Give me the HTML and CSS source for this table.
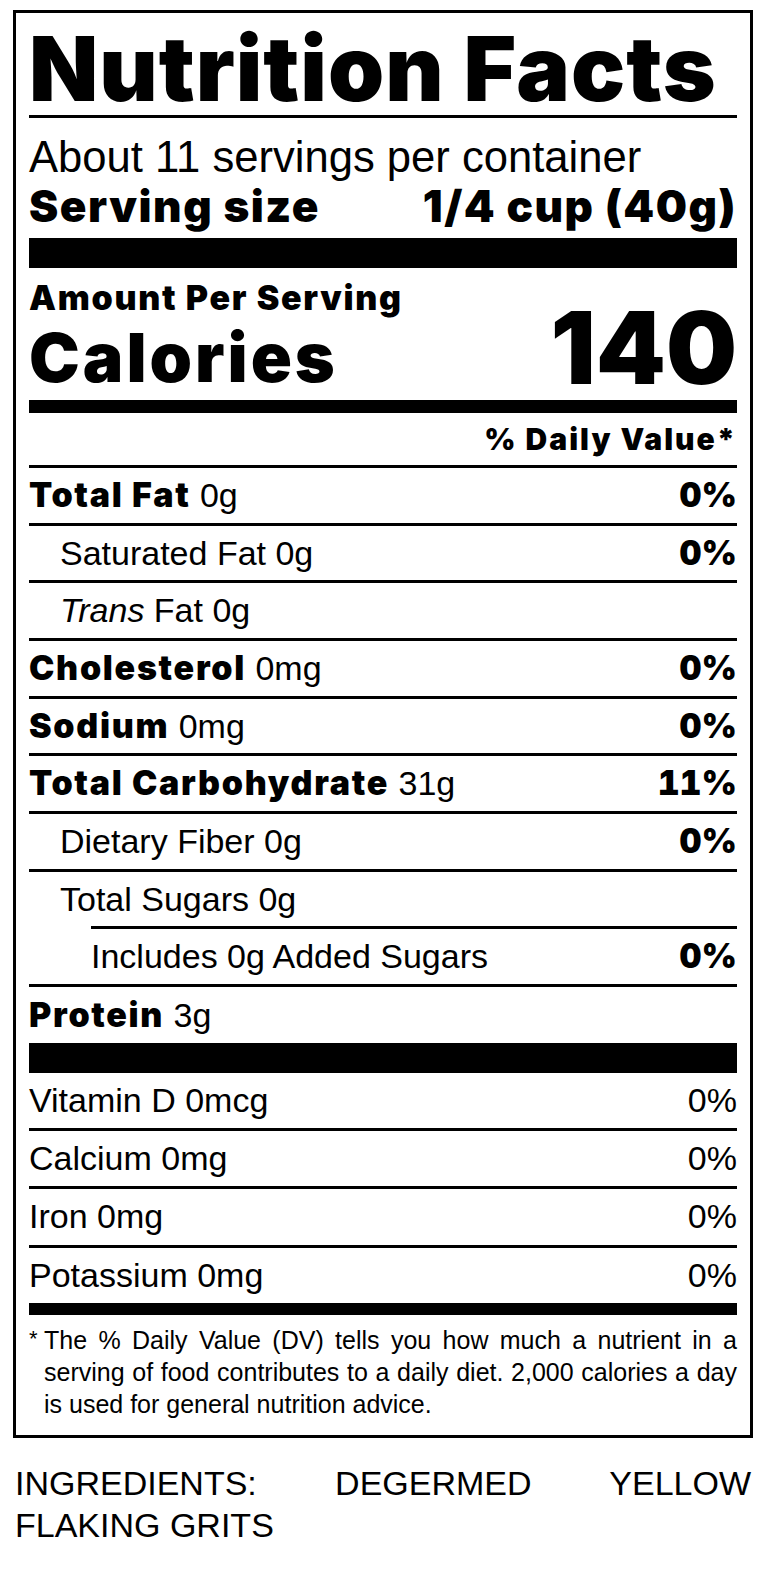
FILE: index.html
```html
<!DOCTYPE html>
<html lang="en">
<head>
<meta charset="utf-8">
<title>Nutrition Facts</title>
<link rel="stylesheet" href="styles.css">
</head>
<body>
<section class="label">
  <h1 class="title">Nutrition Facts</h1>
  <div class="serving">
    <div class="servings-per">About 11 servings per container</div>
    <div class="serving-size"><span>Serving size</span><span>1/4 cup (40g)</span></div>
  </div>
  <div class="bar bar-thick"></div>
  <div class="cal-section">
    <div class="cal-left">
      <div class="amount">Amount Per Serving</div>
      <div class="cal-word">Calories</div>
    </div>
    <div class="cal-num">140</div>
  </div>
  <div class="bar bar-med"></div>
  <div class="dv-head">% Daily Value*</div>
  <div class="row"><span><b>Total Fat</b> 0g</span><b class="pct">0%</b></div>
  <div class="row sub"><span>Saturated Fat 0g</span><b class="pct">0%</b></div>
  <div class="row sub"><span><i>Trans</i> Fat 0g</span></div>
  <div class="row"><span><b>Cholesterol</b> 0mg</span><b class="pct">0%</b></div>
  <div class="row"><span><b>Sodium</b> 0mg</span><b class="pct">0%</b></div>
  <div class="row"><span><b>Total Carbohydrate</b> 31g</span><b class="pct">11%</b></div>
  <div class="row sub"><span>Dietary Fiber 0g</span><b class="pct">0%</b></div>
  <div class="row sub"><span>Total Sugars 0g</span></div>
  <div class="row subsub"><span>Includes 0g Added Sugars</span><b class="pct">0%</b></div>
  <div class="row protein"><span><b>Protein</b> 3g</span></div>
  <div class="bar bar-thick"></div>
  <div class="row vit first"><span>Vitamin D 0mcg</span><span>0%</span></div>
  <div class="row vit"><span>Calcium 0mg</span><span>0%</span></div>
  <div class="row vit"><span>Iron 0mg</span><span>0%</span></div>
  <div class="row vit"><span>Potassium 0mg</span><span>0%</span></div>
  <div class="bar bar-med2"></div>
  <div class="foot">
    <span class="ast">*</span>
    <p class="foot-text">The % Daily Value (DV) tells you how much a nutrient in a serving of food contributes to a daily diet. 2,000 calories a day is used for general nutrition advice.</p>
  </div>
</section>
<p class="ingredients">INGREDIENTS: DEGERMED YELLOW FLAKING GRITS</p>
</body>
</html>
```
FILE: styles.css
```css
html, body {
  margin: 0;
  padding: 0;
  background: #fff;
  color: #000;
  font-family: "Liberation Sans", Arial, sans-serif;
}

.label {
  box-sizing: border-box;
  width: 740px;
  margin: 10px 0 0 13px;
  border: 3px solid #000;
  padding: 0 13px;
}

.title {
  margin: 0;
  font-family: "Inter", "Liberation Sans", sans-serif;
  font-weight: 900;
  font-size: 90px;
  line-height: 90px;
  letter-spacing: 1px;
  height: 105px;
  box-sizing: border-box;
  padding-top: 11px;
  border-bottom: 3px solid #000;
  white-space: nowrap;
}

.serving {
  padding-top: 17px;
  height: 120px;
  box-sizing: border-box;
}

.servings-per {
  font-size: 43.6px;
  line-height: 44px;
  white-space: nowrap;
}

.serving-size {
  display: flex;
  justify-content: space-between;
  font-family: "Inter", "Liberation Sans", sans-serif;
  font-weight: 900;
  font-size: 44px;
  line-height: 54px;
  letter-spacing: 1.5px;
  white-space: nowrap;
}

.bar { background: #000; }
.bar-thick { height: 30px; }
.bar-med { height: 13px; }
.bar-med2 { height: 12px; }

.cal-section {
  display: flex;
  justify-content: space-between;
  align-items: flex-end;
  height: 132px;
  box-sizing: border-box;
  padding: 12px 0 2px;
  font-family: "Inter", "Liberation Sans", sans-serif;
  font-weight: 900;
  white-space: nowrap;
}

.amount {
  font-size: 34px;
  line-height: 36px;
  letter-spacing: 1.7px;
}

.cal-word {
  font-size: 68px;
  line-height: 82px;
  letter-spacing: 3px;
}

.cal-num {
  font-size: 100px;
  line-height: 100px;
}

.dv-head {
  height: 52px;
  line-height: 52px;
  text-align: right;
  font-family: "Inter", "Liberation Sans", sans-serif;
  font-weight: 900;
  font-size: 30px;
  letter-spacing: 2px;
}

.row {
  display: flex;
  justify-content: space-between;
  box-sizing: border-box;
  height: 57.67px;
  line-height: 54.67px;
  border-top: 3px solid #000;
  font-size: 34px;
  white-space: nowrap;
}

.row b {
  font-family: "Inter", "Liberation Sans", sans-serif;
  font-weight: 900;
  letter-spacing: 1.7px;
}

.row b.pct {
  letter-spacing: 0;
  font-variant-numeric: tabular-nums;
}

.row.sub > span { padding-left: 31px; }
.row.subsub { margin-left: 62px; }
.row.protein { height: 59px; line-height: 56px; }

.row.vit.first { border-top: 0; height: 55px; line-height: 55px; }
.row.vit { height: 58.33px; line-height: 55.33px; }

.foot {
  display: flex;
  padding: 9px 0 15px;
  font-size: 25px;
  line-height: 32px;
}

.ast {
  flex: 0 0 15px;
  font-size: 22px;
  line-height: 30px;
}

.foot-text {
  margin: 0;
  flex: 1;
  text-align: justify;
}

.ingredients {
  box-sizing: border-box;
  width: 736px;
  margin: 24px 0 0 15px;
  font-size: 34px;
  line-height: 42px;
  text-align: justify;
}
```
